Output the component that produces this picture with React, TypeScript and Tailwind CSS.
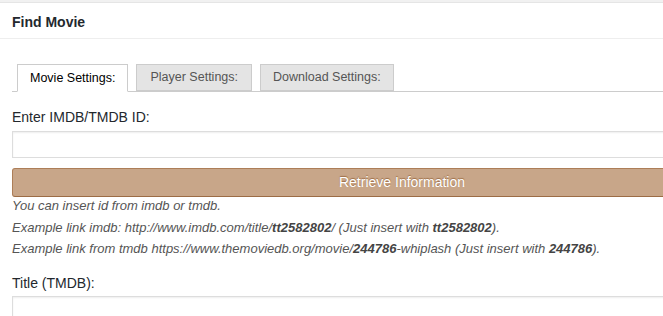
import React from "react";

export default function App() {
  return (
    <div className="w-[663px] h-[316px] overflow-hidden bg-white font-['Liberation_Sans',Arial,sans-serif]">
      <div className="h-[3px] bg-[#f1f1f1] border-b border-[#e5e5e5]" />
      <div className="w-[820px]">
        <div className="h-[36px] pt-[4px] flex items-center px-[12px] text-[14px] font-semibold text-[#23282d] border-b border-[#eeeeee]">
          Find Movie
        </div>
        <div className="px-[12px]">
          <div className="mt-[25px] flex gap-[8px] border-b border-[#cccccc] pl-[5px]">
            <div className="h-[28px] px-[12px] -mb-px border border-[#cccccc] border-b-white bg-white flex items-center text-[12.5px] text-[#000000]">
              Movie Settings:
            </div>
            <div className="h-[27px] px-[13px] border border-[#cccccc] bg-[#e4e4e4] flex items-center text-[12.5px] text-[#555555]">
              Player Settings:
            </div>
            <div className="h-[27px] px-[12px] border border-[#cccccc] bg-[#e4e4e4] flex items-center text-[12.5px] text-[#555555]">
              Download Settings:
            </div>
          </div>
          <div className="mt-[15px] text-[14px] leading-[20px] text-[#23282d]">Enter IMDB/TMDB ID:</div>
          <div className="mt-[4px] h-[27px] w-[780px] border border-[#dddddd] bg-white shadow-[inset_0_1px_2px_rgba(0,0,0,0.07)]" />
          <div className="mt-[10px] h-[29px] w-[780px] rounded-[3px] border border-[#ad7e58] border-b-[#9c6c45] bg-[#c8a689] flex items-center justify-center text-[14px] text-white [text-shadow:0_-1px_1px_#9c6c45]">
            Retrieve Information
          </div>
          <div className="-mt-[2px] text-[13px] leading-[21.5px] italic text-[#555555]">
            <div>You can insert id from imdb or tmdb.</div>
            <div>
              Example link imdb: http://www.imdb.com/title/<b className="text-[#444444]">tt2582802</b>/ (Just insert with{" "}
              <b className="text-[#444444]">tt2582802</b>).
            </div>
            <div>
              Example link from tmdb https://www.themoviedb.org/movie/<b className="text-[#444444]">244786</b>-whiplash (Just insert with{" "}
              <b className="text-[#444444]">244786</b>).
            </div>
          </div>
          <div className="mt-[13px] text-[14px] leading-[20px] text-[#23282d]">Title (TMDB):</div>
          <div className="mt-[3px] h-[27px] w-[780px] border border-[#dddddd] bg-white shadow-[inset_0_1px_2px_rgba(0,0,0,0.07)]" />
        </div>
      </div>
    </div>
  );
}
